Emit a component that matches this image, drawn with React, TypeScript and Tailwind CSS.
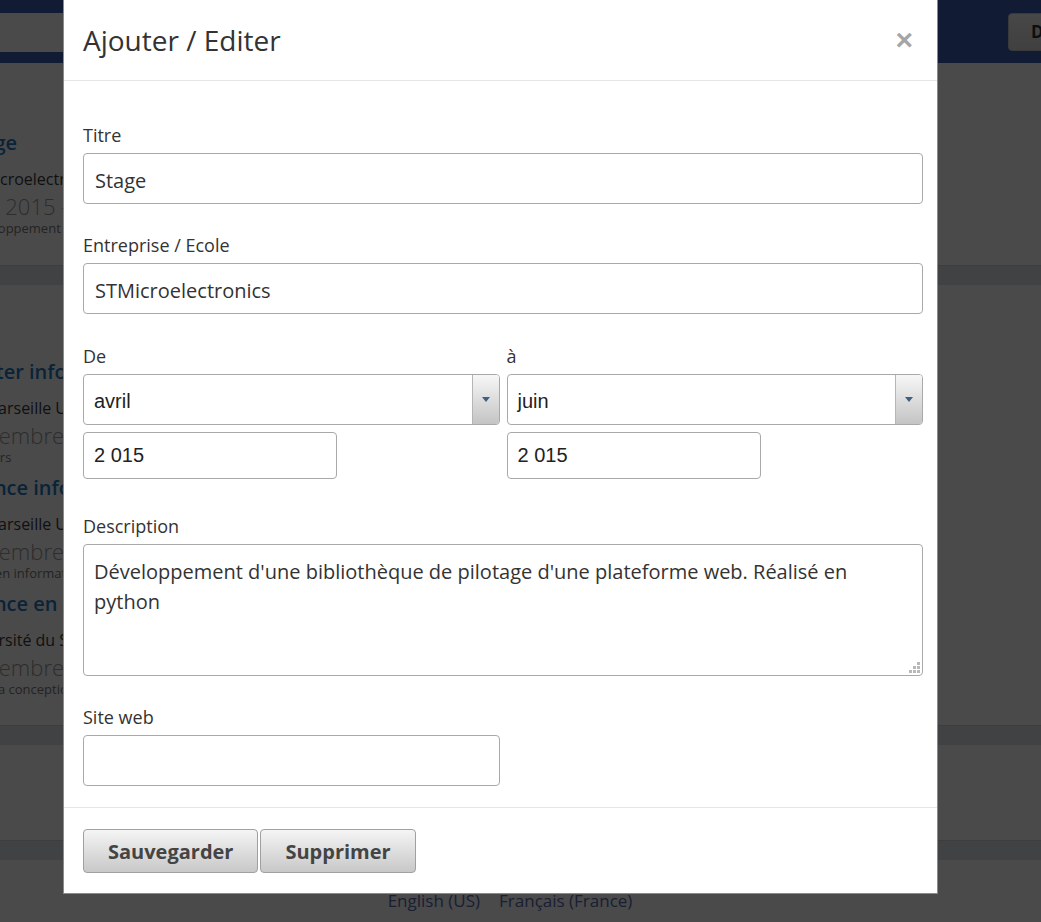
import React from "react";

const sans = "font-['Open_Sans','Noto_Sans',sans-serif]";
const arial = "font-['Liberation_Sans',Arial,sans-serif]";

function Entry({ title, place, dates, desc }: { title: string; place: string; dates: string; desc: string }) {
  return (
    <div className="whitespace-nowrap">
      <div className="text-[20px] leading-[28px] font-semibold text-[#1f7ac0]">{title}</div>
      <div className="mt-[9px] text-[16px] leading-[26px] text-[#3a3a3a]">{place}</div>
      <div className="text-[22px] leading-[28px] font-light text-[#9a9a9a]">{dates}</div>
      <div className="text-[13px] leading-[16px] text-[#7a7a7a]">{desc}</div>
    </div>
  );
}

function Band() {
  return <div className="h-[20px] border-t border-[#cfd3d6] bg-[#e0e4e7]" />;
}

function Page() {
  return (
    <div className={`${sans} flex flex-col`}>
      <div className="flex h-[63px] items-start bg-[#3f5db3] pt-[13px]">
        <div className="-ml-[10px] h-[39px] w-[300px] rounded-[4px] bg-white" />
        <div className="ml-auto -mr-[122px] flex h-[38px] items-center rounded-[4px] border border-[#c9c9c9] bg-gradient-to-b from-[#f5f5f5] to-[#dcdcdc] pl-[22px] pr-[20px] text-[17px] font-bold text-[#333]">
          Déconnexion
        </div>
      </div>
      <div className="-ml-[44px] flex flex-col">
        <div className="h-[202px] pl-[8px] pt-[66px]">
          <Entry
            title="Stage"
            place="STMicroelectronics"
            dates="avr. 2015 - juin 2015"
            desc="Développement d'une bibliothèque de pilotage"
          />
        </div>
        <Band />
        <div className="flex h-[440px] flex-col gap-[9px] pt-[73px]">
          <Entry title="Master informatique" place="Aix-Marseille Université" dates="septembre 2013 - juin 2015" desc="Plusieurs" />
          <Entry title="Licence informatique" place="Aix-Marseille Université" dates="septembre 2010 - juin 2013" desc="Cours en informatique" />
          <Entry title="Licence en sciences" place="Université du Sud" dates="septembre 2008 - juin 2010" desc="Bases la conception" />
        </div>
      </div>
      <Band />
      <div className="h-[95px]" />
      <Band />
      <div className="flex h-[62px] items-center justify-center gap-[19px] pr-[21px] pt-[20px] text-[17px] text-[#5a6ab0]">
        <span>English (US)</span>
        <span>Français (France)</span>
      </div>
    </div>
  );
}

function Label({ children }: { children: React.ReactNode }) {
  return <div className="mb-[5px] text-[18px] leading-[26px] text-[#333]">{children}</div>;
}

const inputCls =
  "block h-[51px] w-full rounded-[4px] border border-[#a9a9a9] bg-white px-[11px] pt-[4px] text-[20px] text-[#333] outline-none";

function Select({ value }: { value: string }) {
  return (
    <div className="flex h-[51px] w-full overflow-hidden rounded-[4px] border border-[#a9a9a9] bg-white">
      <div className={`${arial} flex flex-1 items-center pl-[10px] pt-[2px] text-[20px] text-[#222]`}>{value}</div>
      <div className="flex w-[27px] items-center justify-center border-l border-[#b5b5b5] bg-gradient-to-b from-[#f7f7f7] to-[#c4c4c4]">
        <svg width="8" height="5" viewBox="0 0 8 5">
          <path d="M0 0h8L4 5z" fill="#3f6080" />
        </svg>
      </div>
    </div>
  );
}

function YearInput({ value }: { value: string }) {
  return (
    <input
      readOnly
      value={value}
      className={`${arial} mt-[7px] block h-[47px] w-[254px] rounded-[4px] border border-[#a9a9a9] bg-white px-[10px] text-[20px] text-[#222] outline-none`}
    />
  );
}

const btnCls =
  "h-[44px] rounded-[4px] border border-[#a0a0a0] bg-gradient-to-b from-[#f5f5f5] to-[#c8c8c8] px-[24px] pt-[2px] text-[20px] font-bold text-[#444]";

function Modal() {
  return (
    <div className={`${sans} absolute left-[63px] top-0 w-[875px] border-x border-b border-[#8a8a8a] bg-white`}>
      <div className="flex h-[81px] items-center justify-between border-b border-[#e5e5e5] pb-[1px] pl-[19px] pr-[24px]">
        <h4 className="text-[28px] leading-[38px] text-[#333]">Ajouter / Editer</h4>
        <span className={`${arial} text-[30px] font-bold leading-none text-[#a5a5a5]`}>×</span>
      </div>
      <div className="pb-[21px] pl-[19px] pr-[14px] pt-[41px]">
        <div className="mb-[28px]">
          <Label>Titre</Label>
          <input readOnly value="Stage" className={inputCls} />
        </div>
        <div className="mb-[29px]">
          <Label>Entreprise / Ecole</Label>
          <input readOnly value="STMicroelectronics" className={inputCls} />
        </div>
        <div className="mb-[34px] grid grid-cols-2 gap-x-[7px]">
          <div>
            <Label>De</Label>
            <Select value="avril" />
            <YearInput value="2 015" />
          </div>
          <div>
            <Label>à</Label>
            <Select value="juin" />
            <YearInput value="2 015" />
          </div>
        </div>
        <div className="mb-[28px]">
          <Label>Description</Label>
          <div className="relative">
            <textarea
              readOnly
              value="Développement d'une bibliothèque de pilotage d'une plateforme web. Réalisé en python"
              className="block h-[132px] w-full resize-none rounded-[4px] border border-[#a9a9a9] bg-white px-[10px] py-[12px] text-[20px] leading-[30px] text-[#333] outline-none"
            />
            <svg className="absolute bottom-[3px] right-[3px]" width="11" height="11" viewBox="0 0 11 11">
              <g fill="#b8b8b8">
                <rect x="8" y="0" width="3" height="3" />
                <rect x="4" y="4" width="3" height="3" />
                <rect x="8" y="4" width="3" height="3" />
                <rect x="0" y="8" width="3" height="3" />
                <rect x="4" y="8" width="3" height="3" />
                <rect x="8" y="8" width="3" height="3" />
              </g>
            </svg>
          </div>
        </div>
        <div>
          <Label>Site web</Label>
          <input readOnly value="" className={`${inputCls} !w-[417px]`} />
        </div>
      </div>
      <div className="flex gap-[2px] border-t border-[#e5e5e5] px-[19px] pb-[20px] pt-[21px]">
        <button className={btnCls}>Sauvegarder</button>
        <button className={btnCls}>Supprimer</button>
      </div>
    </div>
  );
}

export default function App() {
  return (
    <div className="relative h-[922px] w-full overflow-hidden bg-white">
      <Page />
      <div className="absolute inset-0 bg-black/[0.71]" />
      <Modal />
    </div>
  );
}
